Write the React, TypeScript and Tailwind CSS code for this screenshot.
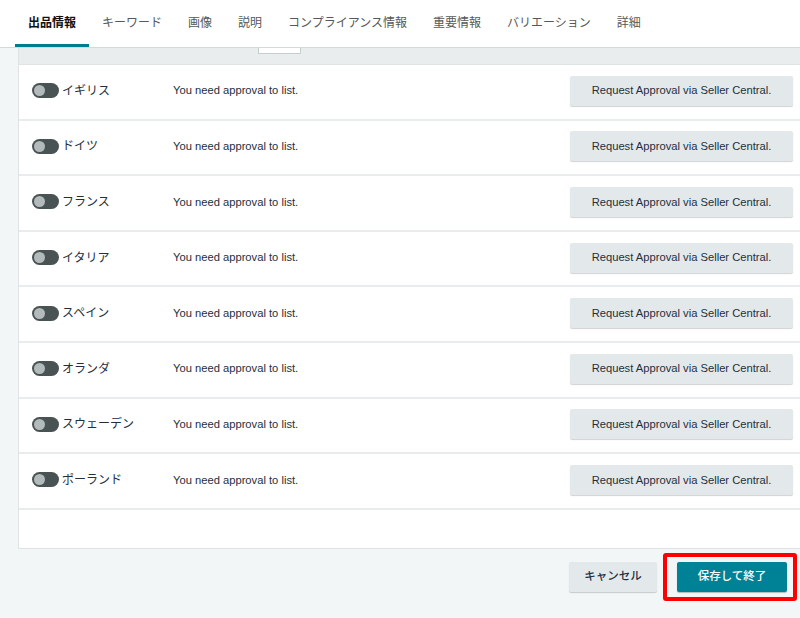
import React from 'react'

const tabs = ['出品情報', 'キーワード', '画像', '説明', 'コンプライアンス情報', '重要情報', 'バリエーション', '詳細']

const countries = ['イギリス', 'ドイツ', 'フランス', 'イタリア', 'スペイン', 'オランダ', 'スウェーデン', 'ポーランド']

function Toggle() {
  return (
    <div className="flex h-[15px] w-[27px] shrink-0 items-center rounded-full bg-[#4a5354] pl-[2px]">
      <div className="h-[11px] w-[11px] rounded-full bg-[#b3babb]" />
    </div>
  )
}

export default function App() {
  return (
    <div
      className="flex h-[618px] w-[800px] flex-col overflow-hidden bg-[#f3f6f6] text-[#0f1111]"
      style={{ fontFamily: '"Liberation Sans", "Noto Sans CJK JP", sans-serif' }}
    >
      {/* Tabs */}
      <div className="flex h-[48px] shrink-0 border-b border-[#d5d9d9] bg-white pl-[15px]">
        {tabs.map((tab, i) => (
          <div
            key={tab}
            className={
              i === 0
                ? 'flex items-center border-b-[3px] border-[#007d8c] px-[13px] pt-[2px] text-[12px] font-bold text-[#0f1111]'
                : 'flex items-center border-b-[3px] border-transparent px-[13px] pt-[2px] text-[12px] text-[#565959]'
            }
          >
            {tab}
          </div>
        ))}
      </div>

      {/* Panel */}
      <div className="ml-[18px] flex shrink-0 flex-col border-b border-l border-[#dfe3e3] bg-white">
        <div className="h-[17px] border-b border-[#dfe3e3] bg-[#e9eded] pl-[239px]">
          <div className="h-[6px] w-[43px] border-x border-b border-[#c7cccc] bg-white" />
        </div>
        {countries.map((c) => (
          <div key={c} className="flex h-[55.6px] items-center border-b-2 border-[#e9ecec] pb-[2px] pl-[13px] pr-[7px]">
            <div className="flex w-[141px] items-center gap-[3px]">
              <Toggle />
              <span className="text-[12px] text-[#232f3e]">{c}</span>
            </div>
            <span className="flex-1 text-[11.2px] text-[#232f3e]">You need approval to list.</span>
            <button className="h-[30px] w-[223px] rounded-[2px] bg-[#e3e9ea] text-[11.2px] text-[#232f3e] shadow-[0_1px_1px_rgba(0,0,0,0.18)]">
              Request Approval via Seller Central.
            </button>
          </div>
        ))}
        <div className="h-[38px]" />
      </div>

      {/* Footer */}
      <div className="mt-[4px] flex items-center justify-end pr-[3px]">
        <button className="mr-[6px] h-[30px] w-[88px] rounded-[2px] bg-[#e3e9ea] text-[11.5px] font-medium text-[#232f3e] shadow-[0_1px_1px_rgba(0,0,0,0.18)]">
          キャンセル
        </button>
        <div className="rounded-[3px] border-4 border-[#ff0000] py-[5px] pl-[10px] pr-[6px]">
          <button className="h-[30px] w-[110px] rounded-[2px] bg-[#008296] text-[11.5px] font-medium text-white shadow-[0_1px_1px_rgba(0,0,0,0.25)]">
            保存して終了
          </button>
        </div>
      </div>
    </div>
  )
}
